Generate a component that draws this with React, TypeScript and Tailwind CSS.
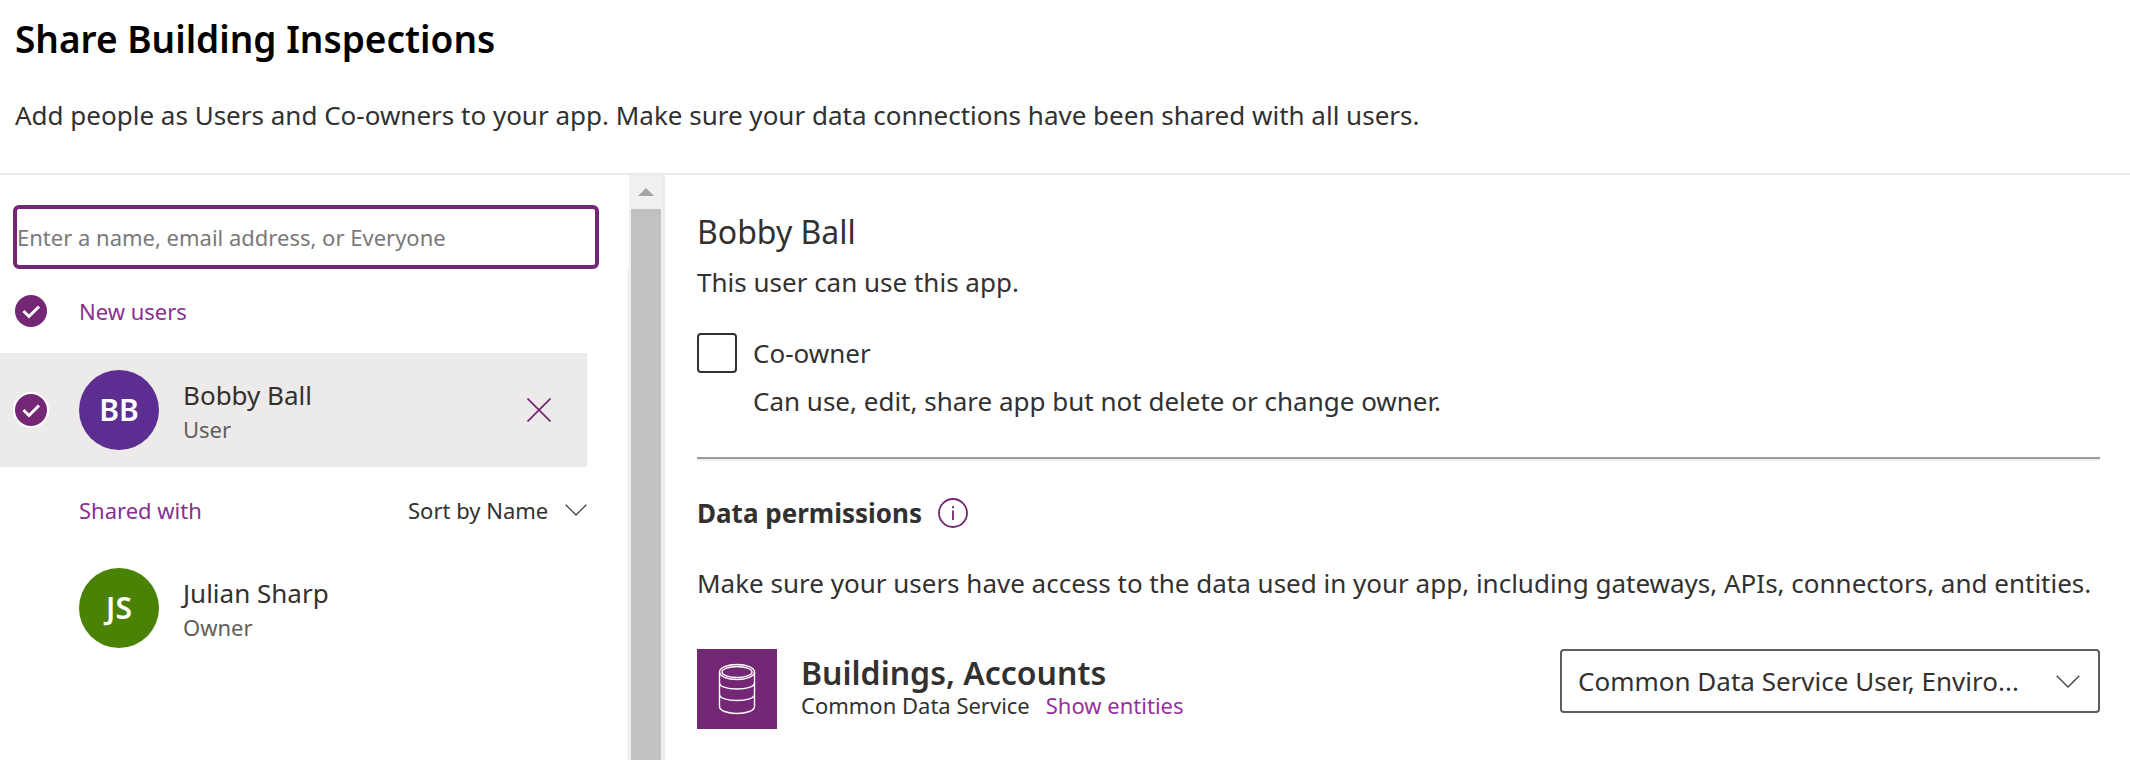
import { useState } from 'react';

interface Person {
  name: string;
  role: string;
  initials: string;
  color: string;
}

const bobby: Person = { name: 'Bobby Ball', role: 'User', initials: 'BB', color: 'bg-[#5c2e91]' };
const julian: Person = { name: 'Julian Sharp', role: 'Owner', initials: 'JS', color: 'bg-[#498205]' };

export default function App() {
  return (
    <div className="min-h-screen flex flex-col bg-white text-[#323130] text-[26px] leading-10 font-['Noto_Sans','Open_Sans',sans-serif]">
      <header className="px-[15px] pt-[11px] pb-[38px] border-b-2 border-[#eaeaea]">
        <h1 className="text-[37px] leading-[56px] font-semibold text-black">Share Building Inspections</h1>
        <p className="mt-7">
          Add people as Users and Co-owners to your app. Make sure your data connections have been shared with all users.
        </p>
      </header>
      <div className="grow flex">
        <PeoplePanel />
        <PermissionsPanel />
      </div>
    </div>
  );
}

function PeoplePanel() {
  const [query, setQuery] = useState('');

  return (
    <aside className="flex w-[665px] shrink-0 border-r-2 border-[#eaeaea]">
      <div className="grow text-[22px] leading-8">
        <div className="pt-[30px] pl-[13px] pr-7">
          <input
            type="text"
            aria-label="Add people"
            placeholder="Enter a name, email address, or Everyone"
            value={query}
            onChange={(e) => setQuery(e.target.value)}
            className="block w-full h-16 border-4 border-[#742774] rounded-md outline-none placeholder:text-[#7a7978]"
          />
        </div>

        <div className="flex items-center h-21 pl-[13px]">
          <CheckCircle label="Select all new users" />
          <h2 className="ml-[30px] text-[#87308f]">New users</h2>
        </div>

        <div className="flex items-center h-[114px] pl-[13px] pr-9 mr-10 bg-[#edebe9]">
          <CheckCircle label="Select Bobby Ball" />
          <div className="ml-[30px] grow">
            <PersonCard person={bobby} />
          </div>
          <button type="button" aria-label="Remove Bobby Ball" className="text-[#742774]">
            <svg viewBox="0 0 24 24" className="w-6 h-6" fill="none" stroke="currentColor" strokeWidth="1.7">
              <path d="M.5.5l23 23M23.5.5l-23 23" />
            </svg>
          </button>
        </div>

        <div className="flex items-center justify-between h-[86px] pl-[79px] pr-10">
          <h2 className="text-[#87308f]">Shared with</h2>
          <div className="grid items-center">
            <select aria-label="Sort order" className="col-start-1 row-start-1 appearance-none pr-[38px] outline-none">
              <option>Sort by Name</option>
            </select>
            <Chevron className="col-start-1 row-start-1 justify-self-end w-[22px] h-3" />
          </div>
        </div>

        <div className="pl-[79px] pt-[15px]">
          <PersonCard person={julian} />
        </div>
      </div>

      {/* scrollbar */}
      <div className="w-9 shrink-0 flex flex-col bg-[#f0f0f0]" aria-hidden="true">
        <div className="h-[34px] flex items-center justify-center border-l-2 border-white">
          <svg viewBox="0 0 16 8" className="w-4 h-2" fill="#a3a3a3">
            <path d="M8 0l8 8H0z" />
          </svg>
        </div>
        <div className="grow flex">
          <div className="w-0.5 h-15 bg-white" />
          <div className="grow mx-0.5 bg-[#c1c1c1]" />
        </div>
      </div>
    </aside>
  );
}

function PermissionsPanel() {
  return (
    <main className="grow min-w-0 pl-8 pr-[30px] pt-[35px]">
      <h2 className="text-[32px] leading-[44px]">Bobby Ball</h2>
      <p className="mt-2">This user can use this app.</p>

      <div className="mt-[31px] flex items-start gap-4">
        <input
          id="co-owner"
          type="checkbox"
          className="appearance-none shrink-0 w-10 h-10 border-2 border-[#323130] rounded-sm checked:bg-[#742774]"
        />
        <div>
          <label htmlFor="co-owner" className="block">Co-owner</label>
          <p className="mt-2">Can use, edit, share app but not delete or change owner.</p>
        </div>
      </div>

      <hr className="mt-9 h-1 border-t-2 border-b-2 border-t-[#9a9a9a] border-b-[#eeeeee]" />

      <div className="mt-8 flex items-center gap-4">
        <h3 className="font-bold">Data permissions</h3>
        <button type="button" aria-label="About data permissions" className="text-[#742774]">
          <svg viewBox="0 0 30 30" className="w-[30px] h-[30px]" fill="none" stroke="currentColor" strokeWidth="1.8">
            <circle cx="15" cy="15" r="14" />
            <path d="M15 12.500v9.500M15 8v2.200" />
          </svg>
        </button>
      </div>

      <p className="mt-[30px]">
        Make sure your users have access to the data used in your app, including gateways, APIs, connectors, and entities.
      </p>

      <div className="mt-[46px] flex items-start">
        <div className="w-20 h-20 shrink-0 flex items-center justify-center bg-[#742774]">
          <DatabaseIcon />
        </div>
        <div className="ml-6 grow">
          <h3 className="mt-0.5 text-[32px] leading-[44px] font-semibold">Buildings, Accounts</h3>
          <p className="-mt-1 text-[22px] leading-7">
            Common Data Service
            <a href="#entities" className="ml-4 text-[#96309c]">Show entities</a>
          </p>
        </div>
        <div className="grid items-center w-[540px]">
          <select
            aria-label="Security role"
            className="col-start-1 row-start-1 appearance-none w-full h-16 pl-4 pr-14 border-2 border-[#605e5c] rounded-sm outline-none"
          >
            <option>Common Data Service User, Enviro...</option>
          </select>
          <Chevron className="col-start-1 row-start-1 justify-self-end mr-5 w-6 h-[13px]" />
        </div>
      </div>
    </main>
  );
}

function PersonCard({ person }: { person: Person }) {
  return (
    <div className="flex items-center">
      <div
        className={`w-20 h-20 shrink-0 flex items-center justify-center rounded-full text-[30px] font-semibold text-white ${person.color}`}
      >
        {person.initials}
      </div>
      <div className="ml-6 pt-0.5">
        <div className="text-[26px] leading-9">{person.name}</div>
        <div className="text-[#605e5c] leading-8">{person.role}</div>
      </div>
    </div>
  );
}

function CheckCircle({ label }: { label: string }) {
  return (
    <span className="grid w-9 h-9">
      <input
        type="checkbox"
        defaultChecked
        aria-label={label}
        className="col-start-1 row-start-1 appearance-none w-9 h-9 rounded-full border-2 border-white bg-[#742774]"
      />
      <svg
        viewBox="0 0 36 36"
        className="col-start-1 row-start-1 w-9 h-9 pointer-events-none"
        fill="none"
        stroke="white"
        strokeWidth="3"
      >
        <path d="M10.500 18l5.500 5.500 10-10" />
      </svg>
    </span>
  );
}

function Chevron({ className }: { className: string }) {
  return (
    <svg viewBox="0 0 24 13" className={`pointer-events-none ${className}`} fill="none" stroke="#484644" strokeWidth="1.4">
      <path d="M.7.7L12 12 23.3.7" />
    </svg>
  );
}

function DatabaseIcon() {
  return (
    <svg viewBox="0 0 38 52" className="w-[38px] h-[52px]" fill="none" stroke="white" strokeWidth="1.4">
      <ellipse cx="19" cy="9" rx="17.5" ry="7.5" />
      <ellipse cx="19" cy="9" rx="15" ry="5.5" />
      <path d="M1.500 9v34.500c0 4 7.800 7 17.500 7s17.500-3 17.500-7V9" />
      <path d="M1.500 20c0 3.800 7.800 6 17.500 6s17.500-2.200 17.500-6M1.500 31.500c0 3.800 7.800 6 17.500 6s17.500-2.200 17.500-6" />
    </svg>
  );
}
